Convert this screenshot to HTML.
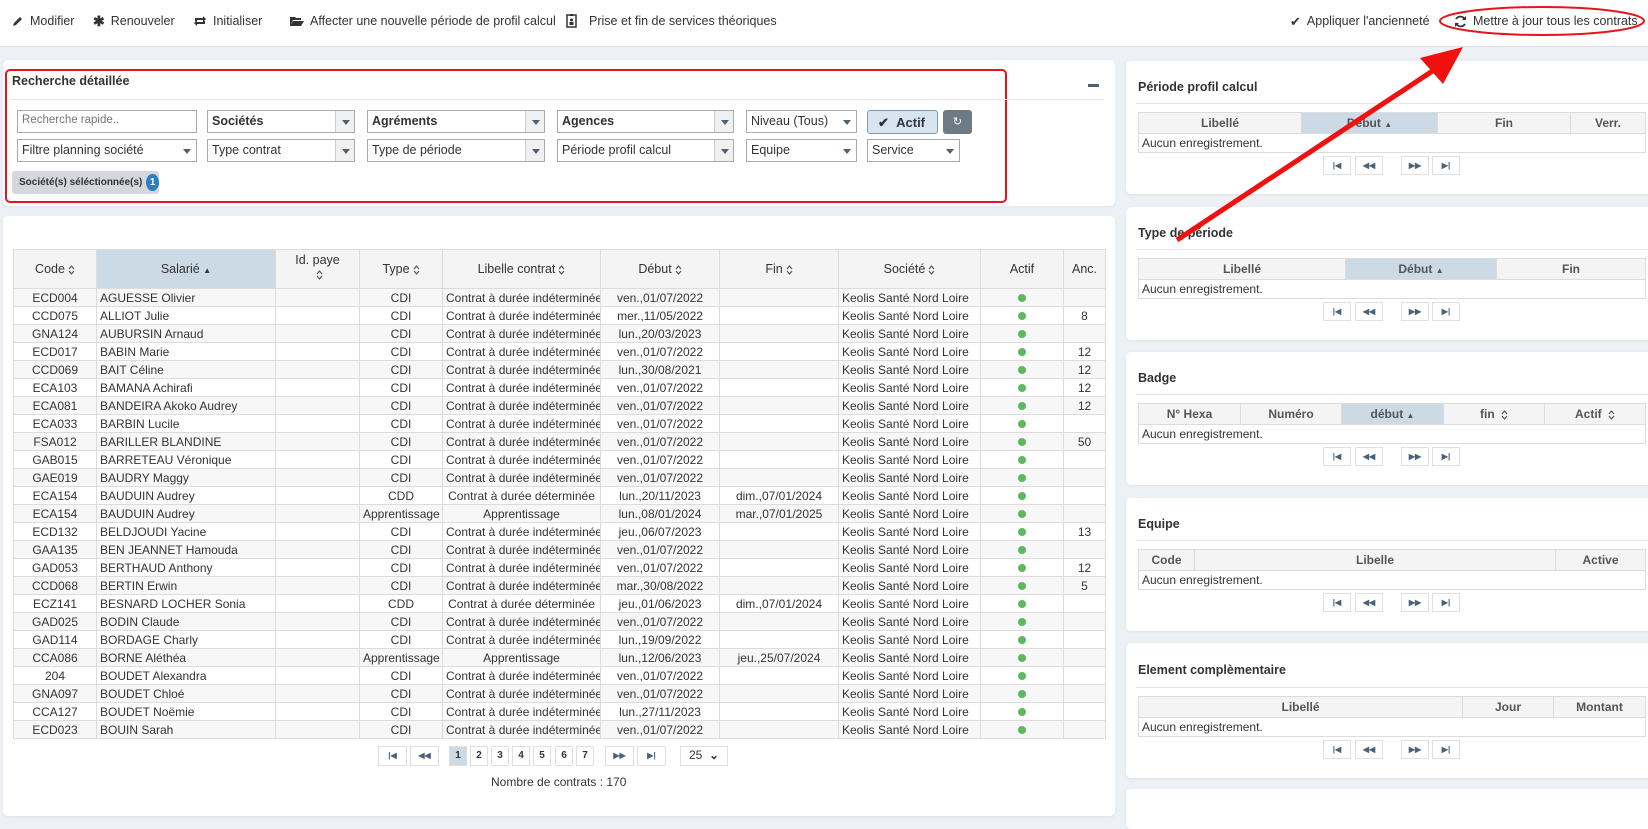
<!DOCTYPE html>
<html><head><meta charset="utf-8">
<style>
*{box-sizing:border-box;margin:0;padding:0}
body{width:1648px;height:798px;overflow:hidden;background:#edf0f4;font-family:"Liberation Sans",sans-serif;font-size:12px;color:#333;position:relative}
.abs{position:absolute}
.tb{position:absolute;left:0;top:0;width:1648px;height:47px;background:#fff;border-bottom:1px solid #dde1e6}
.tbi{position:absolute;top:13px;height:16px;font-size:12.5px;color:#333;white-space:nowrap;display:flex;align-items:center;gap:6px}
.card{position:absolute;background:#fff;border-radius:5px;box-shadow:0 1px 3px rgba(0,0,0,.06)}
.fld{position:absolute;height:23px;border:1px solid #aaa;background:#fff;font-size:12.5px;padding:3px 4px;white-space:nowrap;overflow:hidden}
.fld b{font-weight:bold}
.fld .dd{position:absolute;right:0;top:0;width:19px;height:21px;background:#f0f0f0;border-left:1px solid #ccc}
.fld .dd:after{content:"";position:absolute;left:6px;top:9px;border-left:4px solid transparent;border-right:4px solid transparent;border-top:5px solid #4a6277}
.fld .dd2{background:#fff;border:none}
table{border-collapse:collapse;table-layout:fixed}
.mt td,.mt th{border:1px solid #dcdcdc;height:18px;font-size:12px;white-space:nowrap;overflow:hidden;padding:0 3px}
.mt th{background:#f4f4f4;font-weight:normal;color:#333;height:39px;font-size:12.5px}
.mt th.s{background:#ccdae6}
.mt tr:nth-child(even) td{background:#f7f7f7}
.c{text-align:center}
.dot{display:inline-block;width:8px;height:8px;border-radius:50%;background:#5cb85c}
.st{display:inline-block;width:7px;height:10px;vertical-align:middle;margin-left:3px}
.rt td,.rt th{border:1px solid #dcdcdc;font-size:12px;padding:0 3px;white-space:nowrap}
.rt th{background:#f4f4f4;height:21px;font-weight:bold;color:#555}
.rt th.s{background:#ccdae6}
.rt td{height:19px}
.pb{position:absolute;height:19px;border:1px solid #e0e0e0;background:#fff;font-size:8px;color:#4a6277;text-align:center;line-height:17px;font-weight:bold}
.ptitle{position:absolute;left:12px;font-size:12.5px;font-weight:bold;color:#333}
.pline{position:absolute;left:10px;right:0;height:1px;background:#e6e6e6}
</style></head><body>

<div class="tb"></div>
<div class="tbi" style="left:11px"><svg width="13" height="13" viewBox="0 0 13 13"><path d="M2 11 L3 8 L9 2 L11 4 L5 10 Z" fill="#333"/></svg>Modifier</div>
<div class="tbi" style="left:93px"><span style="font-size:14px;font-weight:bold;line-height:14px">✱</span>Renouveler</div>
<div class="tbi" style="left:193px"><svg width="14" height="12" viewBox="0 0 14 12"><path d="M2 6V3h8V1l3 3-3 3V5H4v1zM12 6v3H4v2L1 8l3-3v2h6V6z" fill="#333"/></svg>Initialiser</div>
<div class="tbi" style="left:290px"><svg width="14" height="12" viewBox="0 0 14 12"><path d="M0 2h5l1 1h5v2H3L0 11z M3 6h11l-3 5H0z" fill="#333"/></svg>Affecter une nouvelle période de profil calcul</div>
<div class="tbi" style="left:566px"><svg width="11" height="14" viewBox="0 0 11 14"><rect x="1" y="1" width="9" height="12" fill="none" stroke="#333" stroke-width="1.5"/><rect x="4" y="0" width="3" height="2" fill="#333"/><circle cx="5.5" cy="6" r="1.5" fill="#333"/><rect x="3.5" y="8" width="4" height="3" fill="#333"/></svg><span style="margin-left:6px">Prise et fin de services théoriques</span></div>
<div class="tbi" style="left:1290px"><span style="font-size:13px;line-height:13px">✔</span>Appliquer l'ancienneté</div>
<div class="tbi" style="left:1454px"><svg width="13" height="13" viewBox="0 0 13 13"><path d="M11 5A5 5 0 0 0 2 4M2 8a5 5 0 0 0 9 1" fill="none" stroke="#333" stroke-width="1.8"/><path d="M12 1v4H8z M1 12V8h4z" fill="#333"/></svg>Mettre à jour tous les contrats</div>

<!-- search card -->
<div class="card" style="left:3px;top:60px;width:1112px;height:146px"></div>
<div class="abs" style="left:5px;top:69px;width:1002px;height:134px;border:2px solid #e8141c;border-radius:5px"></div>
<div class="abs" style="left:12px;top:74px;font-size:12.5px;font-weight:bold">Recherche détaillée</div>
<div class="abs" style="left:1088px;top:84px;width:11px;height:3px;background:#4a6277"></div>
<div class="abs" style="left:10px;top:99px;width:1094px;height:1px;background:#e6e6e6"></div>
<div class="fld" style="left:17px;top:110px;width:180px;color:#777;font-size:11.5px">Recherche rapide..</div>
<div class="fld" style="left:207px;top:110px;width:148px"><b>Sociétés</b><span class="dd"></span></div>
<div class="fld" style="left:367px;top:110px;width:178px"><b>Agréments</b><span class="dd"></span></div>
<div class="fld" style="left:557px;top:110px;width:177px"><b>Agences</b><span class="dd"></span></div>
<div class="fld" style="left:746px;top:110px;width:111px">Niveau (Tous)<span class="dd dd2"></span></div>
<div class="abs" style="left:867px;top:110px;width:71px;height:24px;border:1px solid #7a9bb8;background:#d8e4ef;border-radius:3px;font-size:13px;font-weight:bold;color:#334;padding:4px 0 0 10px">✔ &nbsp;Actif</div>
<div class="abs" style="left:943px;top:110px;width:29px;height:24px;background:#6d7b86;border-radius:3px;color:#fff;text-align:center;line-height:24px;font-size:11px">↻</div>
<div class="fld" style="left:17px;top:139px;width:180px">Filtre planning société<span class="dd dd2"></span></div>
<div class="fld" style="left:207px;top:139px;width:148px">Type contrat<span class="dd"></span></div>
<div class="fld" style="left:367px;top:139px;width:178px">Type de période<span class="dd"></span></div>
<div class="fld" style="left:557px;top:139px;width:177px">Période profil calcul<span class="dd"></span></div>
<div class="fld" style="left:746px;top:139px;width:111px">Equipe<span class="dd dd2"></span></div>
<div class="fld" style="left:867px;top:139px;width:93px">Service<span class="dd dd2"></span></div>
<div class="abs" style="left:12px;top:171px;width:147px;height:23px;background:#d4d8de;border-radius:3px;font-size:10px;font-weight:bold;color:#333;padding-left:7px;display:flex;align-items:center;gap:4px;white-space:nowrap">Société(s) séléctionnée(s)<span style="display:inline-block;width:17px;height:17px;border-radius:50%;background:#2a7fbf;color:#fff;text-align:center;line-height:17px;font-size:10px">1</span></div>

<!-- main table card -->
<div class="card" style="left:3px;top:216px;width:1112px;height:600px"></div>
<table class="mt abs" style="left:13px;top:249px;width:1092px">
<colgroup><col style="width:83px"><col style="width:179px"><col style="width:84px"><col style="width:83px"><col style="width:158px"><col style="width:119px"><col style="width:119px"><col style="width:142px"><col style="width:83px"><col style="width:42px"></colgroup>
<tr><th>Code<svg class="st" viewBox="0 0 7 10"><path d="M1 4l2.5-3 2.5 3M1 6l2.5 3 2.5-3" fill="none" stroke="#555" stroke-width="1.2"/></svg></th><th class="s">Salarié <span style="font-size:8px">▲</span></th><th style="vertical-align:top;padding-top:3px">Id. paye<br><svg class="st" viewBox="0 0 7 10"><path d="M1 4l2.5-3 2.5 3M1 6l2.5 3 2.5-3" fill="none" stroke="#555" stroke-width="1.2"/></svg></th><th>Type<svg class="st" viewBox="0 0 7 10"><path d="M1 4l2.5-3 2.5 3M1 6l2.5 3 2.5-3" fill="none" stroke="#555" stroke-width="1.2"/></svg></th><th>Libelle contrat<svg class="st" viewBox="0 0 7 10"><path d="M1 4l2.5-3 2.5 3M1 6l2.5 3 2.5-3" fill="none" stroke="#555" stroke-width="1.2"/></svg></th><th>Début<svg class="st" viewBox="0 0 7 10"><path d="M1 4l2.5-3 2.5 3M1 6l2.5 3 2.5-3" fill="none" stroke="#555" stroke-width="1.2"/></svg></th><th>Fin<svg class="st" viewBox="0 0 7 10"><path d="M1 4l2.5-3 2.5 3M1 6l2.5 3 2.5-3" fill="none" stroke="#555" stroke-width="1.2"/></svg></th><th>Société<svg class="st" viewBox="0 0 7 10"><path d="M1 4l2.5-3 2.5 3M1 6l2.5 3 2.5-3" fill="none" stroke="#555" stroke-width="1.2"/></svg></th><th>Actif</th><th>Anc.</th></tr>
<tr><td class="c">ECD004</td><td>AGUESSE Olivier</td><td></td><td class="c">CDI</td><td>Contrat à durée indéterminée</td><td class="c">ven.,01/07/2022</td><td></td><td>Keolis Santé Nord Loire</td><td class="c"><span class="dot"></span></td><td class="c"></td></tr>
<tr><td class="c">CCD075</td><td>ALLIOT Julie</td><td></td><td class="c">CDI</td><td>Contrat à durée indéterminée</td><td class="c">mer.,11/05/2022</td><td></td><td>Keolis Santé Nord Loire</td><td class="c"><span class="dot"></span></td><td class="c">8</td></tr>
<tr><td class="c">GNA124</td><td>AUBURSIN Arnaud</td><td></td><td class="c">CDI</td><td>Contrat à durée indéterminée</td><td class="c">lun.,20/03/2023</td><td></td><td>Keolis Santé Nord Loire</td><td class="c"><span class="dot"></span></td><td class="c"></td></tr>
<tr><td class="c">ECD017</td><td>BABIN Marie</td><td></td><td class="c">CDI</td><td>Contrat à durée indéterminée</td><td class="c">ven.,01/07/2022</td><td></td><td>Keolis Santé Nord Loire</td><td class="c"><span class="dot"></span></td><td class="c">12</td></tr>
<tr><td class="c">CCD069</td><td>BAIT Céline</td><td></td><td class="c">CDI</td><td>Contrat à durée indéterminée</td><td class="c">lun.,30/08/2021</td><td></td><td>Keolis Santé Nord Loire</td><td class="c"><span class="dot"></span></td><td class="c">12</td></tr>
<tr><td class="c">ECA103</td><td>BAMANA Achirafi</td><td></td><td class="c">CDI</td><td>Contrat à durée indéterminée</td><td class="c">ven.,01/07/2022</td><td></td><td>Keolis Santé Nord Loire</td><td class="c"><span class="dot"></span></td><td class="c">12</td></tr>
<tr><td class="c">ECA081</td><td>BANDEIRA Akoko Audrey</td><td></td><td class="c">CDI</td><td>Contrat à durée indéterminée</td><td class="c">ven.,01/07/2022</td><td></td><td>Keolis Santé Nord Loire</td><td class="c"><span class="dot"></span></td><td class="c">12</td></tr>
<tr><td class="c">ECA033</td><td>BARBIN Lucile</td><td></td><td class="c">CDI</td><td>Contrat à durée indéterminée</td><td class="c">ven.,01/07/2022</td><td></td><td>Keolis Santé Nord Loire</td><td class="c"><span class="dot"></span></td><td class="c"></td></tr>
<tr><td class="c">FSA012</td><td>BARILLER BLANDINE</td><td></td><td class="c">CDI</td><td>Contrat à durée indéterminée</td><td class="c">ven.,01/07/2022</td><td></td><td>Keolis Santé Nord Loire</td><td class="c"><span class="dot"></span></td><td class="c">50</td></tr>
<tr><td class="c">GAB015</td><td>BARRETEAU Véronique</td><td></td><td class="c">CDI</td><td>Contrat à durée indéterminée</td><td class="c">ven.,01/07/2022</td><td></td><td>Keolis Santé Nord Loire</td><td class="c"><span class="dot"></span></td><td class="c"></td></tr>
<tr><td class="c">GAE019</td><td>BAUDRY Maggy</td><td></td><td class="c">CDI</td><td>Contrat à durée indéterminée</td><td class="c">ven.,01/07/2022</td><td></td><td>Keolis Santé Nord Loire</td><td class="c"><span class="dot"></span></td><td class="c"></td></tr>
<tr><td class="c">ECA154</td><td>BAUDUIN Audrey</td><td></td><td class="c">CDD</td><td class="c">Contrat à durée déterminée</td><td class="c">lun.,20/11/2023</td><td class="c">dim.,07/01/2024</td><td>Keolis Santé Nord Loire</td><td class="c"><span class="dot"></span></td><td class="c"></td></tr>
<tr><td class="c">ECA154</td><td>BAUDUIN Audrey</td><td></td><td class="c">Apprentissage</td><td class="c">Apprentissage</td><td class="c">lun.,08/01/2024</td><td class="c">mar.,07/01/2025</td><td>Keolis Santé Nord Loire</td><td class="c"><span class="dot"></span></td><td class="c"></td></tr>
<tr><td class="c">ECD132</td><td>BELDJOUDI Yacine</td><td></td><td class="c">CDI</td><td>Contrat à durée indéterminée</td><td class="c">jeu.,06/07/2023</td><td></td><td>Keolis Santé Nord Loire</td><td class="c"><span class="dot"></span></td><td class="c">13</td></tr>
<tr><td class="c">GAA135</td><td>BEN JEANNET Hamouda</td><td></td><td class="c">CDI</td><td>Contrat à durée indéterminée</td><td class="c">ven.,01/07/2022</td><td></td><td>Keolis Santé Nord Loire</td><td class="c"><span class="dot"></span></td><td class="c"></td></tr>
<tr><td class="c">GAD053</td><td>BERTHAUD Anthony</td><td></td><td class="c">CDI</td><td>Contrat à durée indéterminée</td><td class="c">ven.,01/07/2022</td><td></td><td>Keolis Santé Nord Loire</td><td class="c"><span class="dot"></span></td><td class="c">12</td></tr>
<tr><td class="c">CCD068</td><td>BERTIN Erwin</td><td></td><td class="c">CDI</td><td>Contrat à durée indéterminée</td><td class="c">mar.,30/08/2022</td><td></td><td>Keolis Santé Nord Loire</td><td class="c"><span class="dot"></span></td><td class="c">5</td></tr>
<tr><td class="c">ECZ141</td><td>BESNARD LOCHER Sonia</td><td></td><td class="c">CDD</td><td class="c">Contrat à durée déterminée</td><td class="c">jeu.,01/06/2023</td><td class="c">dim.,07/01/2024</td><td>Keolis Santé Nord Loire</td><td class="c"><span class="dot"></span></td><td class="c"></td></tr>
<tr><td class="c">GAD025</td><td>BODIN Claude</td><td></td><td class="c">CDI</td><td>Contrat à durée indéterminée</td><td class="c">ven.,01/07/2022</td><td></td><td>Keolis Santé Nord Loire</td><td class="c"><span class="dot"></span></td><td class="c"></td></tr>
<tr><td class="c">GAD114</td><td>BORDAGE Charly</td><td></td><td class="c">CDI</td><td>Contrat à durée indéterminée</td><td class="c">lun.,19/09/2022</td><td></td><td>Keolis Santé Nord Loire</td><td class="c"><span class="dot"></span></td><td class="c"></td></tr>
<tr><td class="c">CCA086</td><td>BORNE Aléthéa</td><td></td><td class="c">Apprentissage</td><td class="c">Apprentissage</td><td class="c">lun.,12/06/2023</td><td class="c">jeu.,25/07/2024</td><td>Keolis Santé Nord Loire</td><td class="c"><span class="dot"></span></td><td class="c"></td></tr>
<tr><td class="c">204</td><td>BOUDET Alexandra</td><td></td><td class="c">CDI</td><td>Contrat à durée indéterminée</td><td class="c">ven.,01/07/2022</td><td></td><td>Keolis Santé Nord Loire</td><td class="c"><span class="dot"></span></td><td class="c"></td></tr>
<tr><td class="c">GNA097</td><td>BOUDET Chloé</td><td></td><td class="c">CDI</td><td>Contrat à durée indéterminée</td><td class="c">ven.,01/07/2022</td><td></td><td>Keolis Santé Nord Loire</td><td class="c"><span class="dot"></span></td><td class="c"></td></tr>
<tr><td class="c">CCA127</td><td>BOUDET Noëmie</td><td></td><td class="c">CDI</td><td>Contrat à durée indéterminée</td><td class="c">lun.,27/11/2023</td><td></td><td>Keolis Santé Nord Loire</td><td class="c"><span class="dot"></span></td><td class="c"></td></tr>
<tr><td class="c">ECD023</td><td>BOUIN Sarah</td><td></td><td class="c">CDI</td><td>Contrat à durée indéterminée</td><td class="c">ven.,01/07/2022</td><td></td><td>Keolis Santé Nord Loire</td><td class="c"><span class="dot"></span></td><td class="c"></td></tr>
</table>

<!-- main pagination -->
<div class="pb" style="left:378px;top:746px;width:29px;height:20px">|◀</div>
<div class="pb" style="left:410px;top:746px;width:29px;height:20px">◀◀</div>
<div class="pb" style="left:449px;top:746px;width:18px;height:20px;background:#ccdae6;font-size:10px;color:#333">1</div>
<div class="pb" style="left:470px;top:746px;width:18px;height:20px;font-size:10px;color:#333">2</div>
<div class="pb" style="left:491px;top:746px;width:18px;height:20px;font-size:10px;color:#333">3</div>
<div class="pb" style="left:512px;top:746px;width:18px;height:20px;font-size:10px;color:#333">4</div>
<div class="pb" style="left:533px;top:746px;width:18px;height:20px;font-size:10px;color:#333">5</div>
<div class="pb" style="left:555px;top:746px;width:18px;height:20px;font-size:10px;color:#333">6</div>
<div class="pb" style="left:576px;top:746px;width:18px;height:20px;font-size:10px;color:#333">7</div>
<div class="pb" style="left:605px;top:746px;width:29px;height:20px">▶▶</div>
<div class="pb" style="left:637px;top:746px;width:29px;height:20px">▶|</div>
<div class="pb" style="left:680px;top:746px;width:48px;height:20px;font-size:12px;color:#333;font-weight:normal">25 &nbsp;<b>⌄</b></div>
<div class="abs" style="left:491px;top:775px;font-size:12px">Nombre de contrats : 170</div>

<!-- right panels -->
<div class="card" style="left:1126px;top:61px;width:530px;height:133px">
 <div class="ptitle" style="top:19px">Période profil calcul</div><div class="pline" style="top:42px"></div>
 <table class="rt abs" style="left:12px;top:51px;width:507px"><colgroup><col style="width:163px"><col style="width:136px"><col style="width:133px"><col style="width:75px"></colgroup>
 <tr><th>Libellé</th><th class="s">Début <span style="font-size:8px">▲</span></th><th>Fin</th><th>Verr.</th></tr><tr><td colspan="4">Aucun enregistrement.</td></tr></table>
 <div class="pb" style="left:197px;top:95px;width:28px">|◀</div><div class="pb" style="left:229px;top:95px;width:28px">◀◀</div><div class="pb" style="left:275px;top:95px;width:28px">▶▶</div><div class="pb" style="left:306px;top:95px;width:28px">▶|</div>
</div>
<div class="card" style="left:1126px;top:207px;width:530px;height:133px">
 <div class="ptitle" style="top:19px">Type de période</div><div class="pline" style="top:42px"></div>
 <table class="rt abs" style="left:12px;top:51px;width:507px"><colgroup><col style="width:207px"><col style="width:151px"><col style="width:149px"></colgroup>
 <tr><th>Libellé</th><th class="s">Début <span style="font-size:8px">▲</span></th><th>Fin</th></tr><tr><td colspan="3">Aucun enregistrement.</td></tr></table>
 <div class="pb" style="left:197px;top:95px;width:28px">|◀</div><div class="pb" style="left:229px;top:95px;width:28px">◀◀</div><div class="pb" style="left:275px;top:95px;width:28px">▶▶</div><div class="pb" style="left:306px;top:95px;width:28px">▶|</div>
</div>
<div class="card" style="left:1126px;top:352px;width:530px;height:133px">
 <div class="ptitle" style="top:19px">Badge</div><div class="pline" style="top:42px"></div>
 <table class="rt abs" style="left:12px;top:51px;width:507px"><colgroup><col style="width:102px"><col style="width:101px"><col style="width:102px"><col style="width:101px"><col style="width:101px"></colgroup>
 <tr><th>N° Hexa</th><th>Numéro</th><th class="s">début <span style="font-size:8px">▲</span></th><th>fin <svg class="st" viewBox="0 0 7 10"><path d="M1 4l2.5-3 2.5 3M1 6l2.5 3 2.5-3" fill="none" stroke="#555" stroke-width="1.2"/></svg></th><th>Actif <svg class="st" viewBox="0 0 7 10"><path d="M1 4l2.5-3 2.5 3M1 6l2.5 3 2.5-3" fill="none" stroke="#555" stroke-width="1.2"/></svg></th></tr><tr><td colspan="5">Aucun enregistrement.</td></tr></table>
 <div class="pb" style="left:197px;top:95px;width:28px">|◀</div><div class="pb" style="left:229px;top:95px;width:28px">◀◀</div><div class="pb" style="left:275px;top:95px;width:28px">▶▶</div><div class="pb" style="left:306px;top:95px;width:28px">▶|</div>
</div>
<div class="card" style="left:1126px;top:498px;width:530px;height:133px">
 <div class="ptitle" style="top:19px">Equipe</div><div class="pline" style="top:42px"></div>
 <table class="rt abs" style="left:12px;top:51px;width:507px"><colgroup><col style="width:56px"><col style="width:361px"><col style="width:90px"></colgroup>
 <tr><th>Code</th><th>Libelle</th><th>Active</th></tr><tr><td colspan="3">Aucun enregistrement.</td></tr></table>
 <div class="pb" style="left:197px;top:95px;width:28px">|◀</div><div class="pb" style="left:229px;top:95px;width:28px">◀◀</div><div class="pb" style="left:275px;top:95px;width:28px">▶▶</div><div class="pb" style="left:306px;top:95px;width:28px">▶|</div>
</div>
<div class="card" style="left:1126px;top:643px;width:530px;height:135px">
 <div class="ptitle" style="top:20px">Element complèmentaire</div><div class="pline" style="top:44px"></div>
 <table class="rt abs" style="left:12px;top:53px;width:507px"><colgroup><col style="width:324px"><col style="width:91px"><col style="width:92px"></colgroup>
 <tr><th>Libellé</th><th>Jour</th><th>Montant</th></tr><tr><td colspan="3">Aucun enregistrement.</td></tr></table>
 <div class="pb" style="left:197px;top:97px;width:28px">|◀</div><div class="pb" style="left:229px;top:97px;width:28px">◀◀</div><div class="pb" style="left:275px;top:97px;width:28px">▶▶</div><div class="pb" style="left:306px;top:97px;width:28px">▶|</div>
</div>
<div class="card" style="left:1126px;top:789px;width:530px;height:40px"></div>

<!-- annotations -->
<svg class="abs" style="left:0;top:0" width="1648" height="798">
 <ellipse cx="1542" cy="21" rx="102" ry="14" fill="none" stroke="#e8141c" stroke-width="2"/>
 <line x1="1177" y1="240" x2="1440" y2="66" stroke="#f01010" stroke-width="5"/>
 <polygon points="1463,47 1420,58 1443,84" fill="#f01010"/>
</svg>
</body></html>
